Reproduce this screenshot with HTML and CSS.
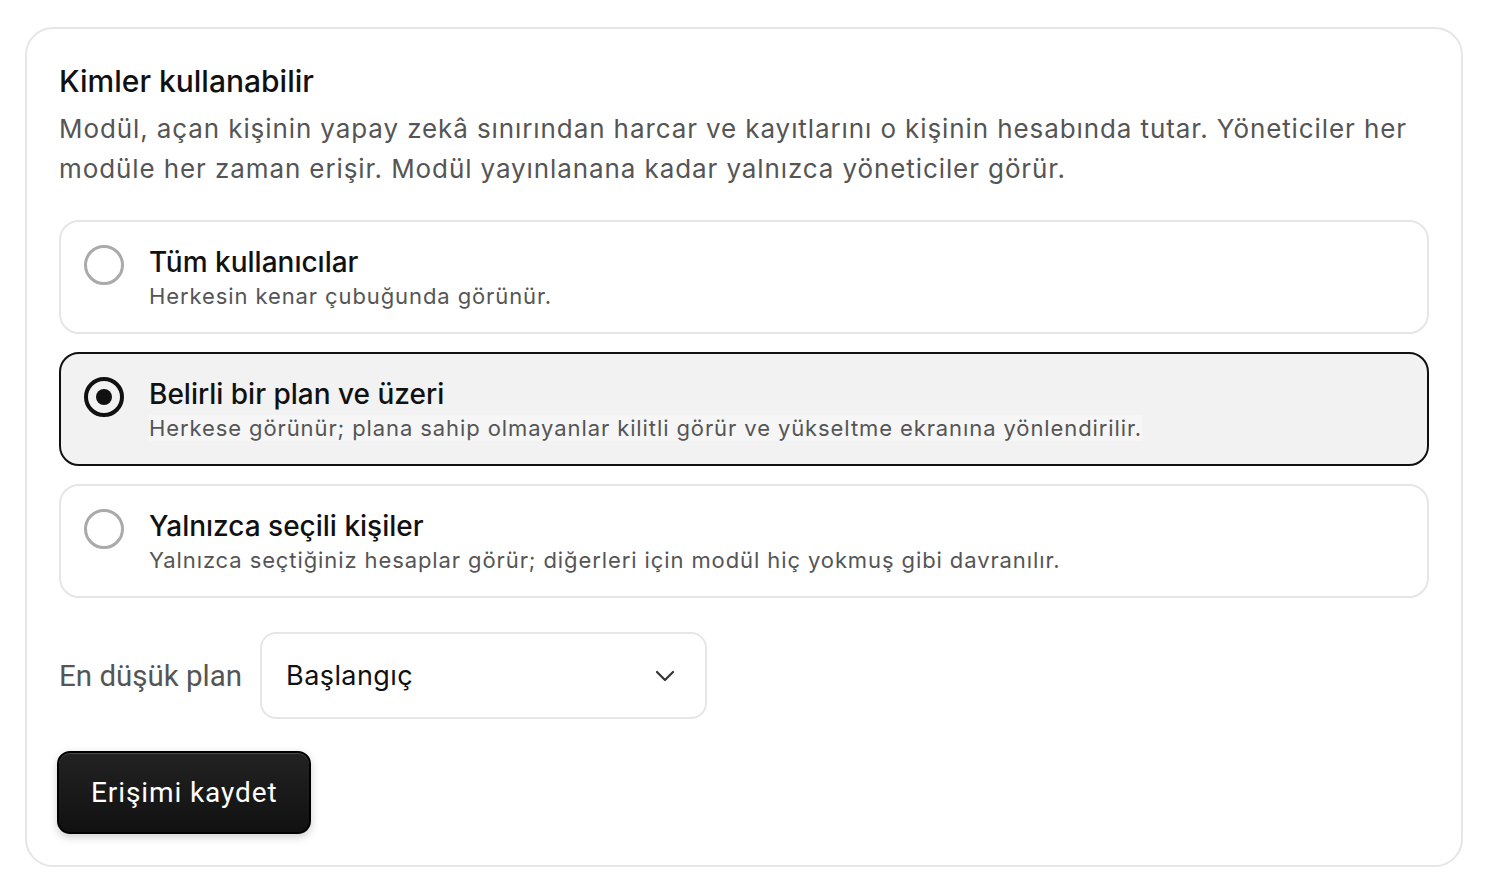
FILE: index.html
```
<!DOCTYPE html>
<html lang="tr">

<head>
    <meta charset="UTF-8">
    <meta name="viewport" content="width=device-width, initial-scale=1.0">
    <title>Kimler kullanabilir</title>
    <link rel="stylesheet" href="styles.css">
</head>

<body>
    <section class="card">
        <h2 class="card-title">Kimler kullanabilir</h2>
        <p class="card-text">Modül, açan kişinin yapay zekâ sınırından harcar ve kayıtlarını o kişinin hesabında tutar. Yöneticiler her modüle her zaman erişir. Modül yayınlanana kadar yalnızca yöneticiler görür.</p>

        <div class="options">
            <label class="option">
                <span class="radio"></span>
                <span class="option-body">
                    <span class="option-title">Tüm kullanıcılar</span>
                    <span class="option-desc"><span class="desc-text">Herkesin kenar çubuğunda görünür.</span></span>
                </span>
            </label>
            <label class="option selected">
                <span class="radio"></span>
                <span class="option-body">
                    <span class="option-title">Belirli bir plan ve üzeri</span>
                    <span class="option-desc"><span class="desc-text">Herkese görünür; plana sahip olmayanlar kilitli görür ve yükseltme ekranına yönlendirilir.</span></span>
                </span>
            </label>
            <label class="option">
                <span class="radio"></span>
                <span class="option-body">
                    <span class="option-title">Yalnızca seçili kişiler</span>
                    <span class="option-desc"><span class="desc-text">Yalnızca seçtiğiniz hesaplar görür; diğerleri için modül hiç yokmuş gibi davranılır.</span></span>
                </span>
            </label>
        </div>

        <div class="plan-row">
            <span class="plan-label">En düşük plan</span>
            <div class="select">
                <span>Başlangıç</span>
                <svg class="chevron" width="20" height="12" viewBox="0 0 20 12" fill="none">
                    <path d="M2 2l8 8 8-8" stroke="#333" stroke-width="2.2" stroke-linecap="round" stroke-linejoin="round" />
                </svg>
            </div>
        </div>

        <button class="save-btn">Erişimi kaydet</button>
    </section>
</body>

</html>
```

FILE: styles.css
```
body {
    font-family: Inter, "Noto Sans", sans-serif;
    background-color: #fff;
    color: #111;
    margin: 0;
    padding: 27px 25px;
}

.card {
    border: 2px solid #e6e6e6;
    border-radius: 28px;
    padding: 32px 32px 31px 32px;
}

.card-title {
    font-size: 30px;
    font-weight: 500;
    line-height: 40px;
    margin: 0;
    color: #111;
}

.card-text {
    font-size: 26px;
    line-height: 40px;
    letter-spacing: 0.9px;
    color: #555;
    margin: 8px 0 0 0;
}

.options {
    display: flex;
    flex-direction: column;
    gap: 18px;
    margin-top: 31px;
}

.option {
    display: flex;
    align-items: flex-start;
    gap: 25px;
    border: 2px solid #e6e6e6;
    border-radius: 20px;
    padding: 22px 23px 20px 23px;
    background-color: #fff;
}

.option.selected {
    border-color: #111;
    background-color: #f2f2f2;
}

.radio {
    flex: none;
    box-sizing: border-box;
    width: 40px;
    height: 40px;
    margin-top: 1px;
    border: 3px solid #aaa;
    border-radius: 50%;
    display: flex;
    align-items: center;
    justify-content: center;
}

.selected .radio {
    border: 4px solid #111;
}

.selected .radio::after {
    content: "";
    width: 16px;
    height: 16px;
    border-radius: 50%;
    background-color: #111;
}

.option-body {
    display: flex;
    flex-direction: column;
}

.option-title {
    font-size: 28px;
    line-height: 36px;
    font-weight: 500;
    color: #111;
}

.option-desc {
    font-size: 22px;
    line-height: 32px;
    letter-spacing: 0.9px;
    color: #555;
}

.selected .desc-text {
    background-color: #f6f6f6;
}

.plan-row {
    display: flex;
    align-items: center;
    gap: 18px;
    margin-top: 34px;
}

.plan-label {
    font-family: Roboto, sans-serif;
    font-size: 29.5px;
    color: #555;
}

.select {
    box-sizing: border-box;
    width: 447px;
    height: 87px;
    border: 2px solid #e6e6e6;
    border-radius: 16px;
    padding: 0 30px 0 24px;
    display: flex;
    align-items: center;
    justify-content: space-between;
    font-size: 27px;
    letter-spacing: 0.4px;
    color: #111;
}

.save-btn {
    display: block;
    margin-top: 32px;
    margin-left: -2px;
    height: 83px;
    padding: 0 32px;
    font-family: Roboto, sans-serif;
    font-size: 28px;
    letter-spacing: 0.9px;
    color: #fff;
    background: linear-gradient(#222, #111);
    border: 2px solid #000;
    border-radius: 13px;
    box-shadow: inset 0 1px 0 rgba(255, 255, 255, 0.18), 0 3px 8px rgba(0, 0, 0, 0.2);
    cursor: pointer;
}
```
